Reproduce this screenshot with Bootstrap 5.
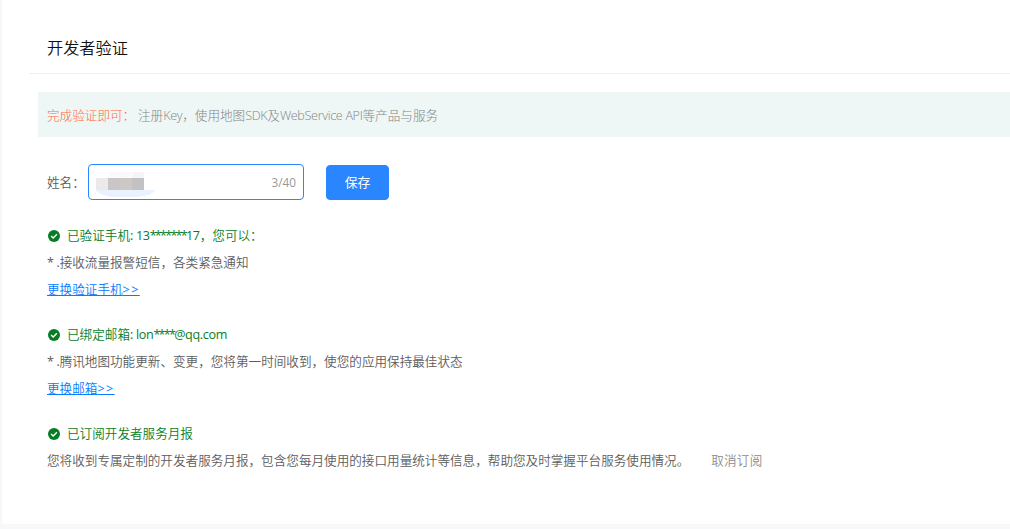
<!DOCTYPE html>
<html lang="zh-CN">
<head>
<meta charset="utf-8">
<meta name="viewport" content="width=device-width, initial-scale=1">
<title>开发者验证</title>
<link rel="stylesheet" href="https://cdn.jsdelivr.net/npm/bootstrap@5.3.0/dist/css/bootstrap.min.css">
<style>
body{background:#f7f8fa;font-family:"Open Sans","Noto Sans CJK SC",sans-serif;font-size:12.6px;font-weight:350;line-height:27px;color:#5c5c5c;overflow:hidden}
.panel{background:#fff;margin-left:2px;height:524px;padding-left:27px}
.panel-head{height:74px;border-bottom:1px solid #eee;padding:26px 0 0 18px}
.panel-head h1{font-size:16.2px;line-height:44px;font-weight:350;color:#111}
.notice{margin:18px 0 0 9px;height:45px;padding:2px 0 0 9px;background:#eef7f6;color:#858585;font-weight:300}
.notice .lead-in{color:#ff6845;width:91px}
.content{padding-left:18px}
.name-row{margin-top:27px;height:36px}
.name-row label{width:41px}
.name-box{width:216px;height:36px;border:1px solid #2a86ff;border-radius:4px;padding:0 7px;color:#999;font-size:11.8px;font-weight:400}
.name-box svg{margin-top:8px}
.btn-save{--bs-btn-color:#fff;--bs-btn-bg:#2a86ff;--bs-btn-border-color:#2a86ff;--bs-btn-font-size:12.8px;width:63px;height:35px;margin:1px 0 0 22px;padding:0;border-radius:4px}
.blocks{margin-top:22px;gap:18px}
.ok{color:#067d25}
.ok svg{margin:0 7px 0 1px}
.blocks a{color:#0a7bff}
.blocks .cancel{color:#8c8c8c;margin-left:22px;letter-spacing:.2px}
.t1{letter-spacing:-.33px}
.blocks .t1{font-weight:400}
.t2{letter-spacing:-.3px;font-weight:400}
.stars{letter-spacing:-1.75px}
.arrows{letter-spacing:1.4px;font-weight:400}
</style>
</head>
<body>
<svg class="d-none"><symbol id="check" viewBox="0 0 12 12"><circle cx="6" cy="6" r="6" fill="#067d25"/><path d="M3.1 6.1 5.2 8.1 8.9 4.3" fill="none" stroke="#fff" stroke-width="1.4"/></symbol></svg>
<main class="panel">
  <header class="panel-head"><h1 class="m-0">开发者验证</h1></header>
  <div class="notice d-flex align-items-center text-nowrap"><span class="lead-in">完成验证即可：</span><span>注册<span class="t1">Key</span>，使用地图<span class="t1">SDK</span>及<span class="t1">WebService API</span>等产品与服务</span></div>
  <div class="content">
    <div class="name-row d-flex align-items-center">
      <label>姓名：</label>
      <div class="name-box d-flex align-items-center justify-content-between">
        <svg width="60" height="28" shape-rendering="crispEdges"><path d="M0 18h59q-3 5-11 6t-13 1H17Q4 24 0 18" fill="#eaf2ff"/><path d="M13 0h24v6H13z" fill="#faf9fb"/><path d="M0 6h13v12H0z" fill="#ebeaea"/><path d="M12 6h12v12H12z" fill="#c9c6c7"/><path d="M24 6h13v12H24z" fill="#cbc8c6"/><path d="M36 6h12v12H36z" fill="#c2c2c5"/><path d="M37 0h11v6H37z" fill="#f5f4f7"/></svg>
        <span>3/40</span>
      </div>
      <button class="btn btn-save" type="button">保存</button>
    </div>
    <div class="blocks d-flex flex-column text-nowrap">
      <section>
        <div class="ok d-flex align-items-center"><svg width="12" height="12"><use href="#check"/></svg><span>已验证手机<span class="t1">: 13<span class="stars">*******</span>17</span>，您可以：</span></div>
        <div><span class="t2">* .</span>接收流量报警短信，各类紧急通知</div>
        <div><a href="#">更换验证手机<span class="arrows">&gt;&gt;</span></a></div>
      </section>
      <section>
        <div class="ok d-flex align-items-center"><svg width="12" height="12"><use href="#check"/></svg><span>已绑定邮箱<span class="t1">: lon<span class="stars">****</span>@qq.com</span></span></div>
        <div><span class="t2">* .</span>腾讯地图功能更新、变更，您将第一时间收到，使您的应用保持最佳状态</div>
        <div><a href="#">更换邮箱<span class="arrows">&gt;&gt;</span></a></div>
      </section>
      <section>
        <div class="ok d-flex align-items-center"><svg width="12" height="12"><use href="#check"/></svg><span>已订阅开发者服务月报</span></div>
        <div class="d-flex"><span>您将收到专属定制的开发者服务月报，包含您每月使用的接口用量统计等信息，帮助您及时掌握平台服务使用情况。</span><a href="#" class="cancel text-decoration-none">取消订阅</a></div>
      </section>
    </div>
  </div>
</main>
<script src="https://cdn.jsdelivr.net/npm/bootstrap@5.3.0/dist/js/bootstrap.bundle.min.js"></script>
</body>
</html>
